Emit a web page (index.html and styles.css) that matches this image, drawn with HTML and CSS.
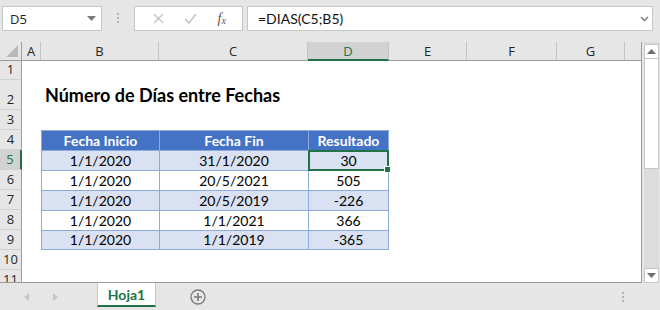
FILE: index.html
```html
<!DOCTYPE html>
<html lang="es">
<head>
    <meta charset="UTF-8">
    <title>Número de Días entre Fechas</title>
    <link rel="stylesheet" href="styles.css">
</head>
<body>
    <div class="app">
        <div class="formula-bar">
            <div class="name-box">
                <span>D5</span>
                <svg width="9" height="5" viewBox="0 0 9 5"><path d="M0 0h9L4.5 5z" fill="#7a7a7a"/></svg>
            </div>
            <div class="grip"><i></i><i></i><i></i></div>
            <div class="fx-buttons">
                <svg width="11" height="11" viewBox="0 0 11 11"><path d="M1 1l9 9M10 1l-9 9" stroke="#c4c4c4" stroke-width="1.4"/></svg>
                <svg width="13" height="11" viewBox="0 0 13 11"><path d="M1 6l4 4 7-9" stroke="#c4c4c4" stroke-width="1.6" fill="none"/></svg>
                <span class="fx">f<sub>x</sub></span>
            </div>
            <div class="formula-input">
                <span>=DIAS(C5;B5)</span>
                <svg width="9" height="6" viewBox="0 0 9 6"><path d="M1 1l3.5 3.5L8 1" stroke="#7a7a7a" stroke-width="1.5" fill="none"/></svg>
            </div>
        </div>

        <div class="workspace">
            <div class="grid">
                <div class="corner"><svg width="12" height="12" viewBox="0 0 12 12"><path d="M12 0v12H0z" fill="#b9b9b9"/></svg></div>
                <div class="col-head">A</div>
                <div class="col-head">B</div>
                <div class="col-head">C</div>
                <div class="col-head active">D</div>
                <div class="col-head">E</div>
                <div class="col-head">F</div>
                <div class="col-head">G</div>
                <div class="col-head last"></div>

                <div class="row-head">1</div>

                <div class="row-head">2</div>
                <div class="title">Número de Días entre Fechas</div>

                <div class="row-head">3</div>

                <div class="row-head">4</div>
                <div class="cell th cb">Fecha Inicio</div>
                <div class="cell th cc">Fecha Fin</div>
                <div class="cell th cd">Resultado</div>

                <div class="row-head active">5</div>
                <div class="cell band cb">1/1/2020</div>
                <div class="cell band cc">31/1/2020</div>
                <div class="cell band cd selected">30</div>

                <div class="row-head">6</div>
                <div class="cell cb">1/1/2020</div>
                <div class="cell cc">20/5/2021</div>
                <div class="cell cd">505</div>

                <div class="row-head">7</div>
                <div class="cell band cb">1/1/2020</div>
                <div class="cell band cc">20/5/2019</div>
                <div class="cell band cd">-226</div>

                <div class="row-head">8</div>
                <div class="cell cb">1/1/2020</div>
                <div class="cell cc">1/1/2021</div>
                <div class="cell cd">366</div>

                <div class="row-head">9</div>
                <div class="cell band cb bottom">1/1/2020</div>
                <div class="cell band cc bottom">1/1/2019</div>
                <div class="cell band cd bottom">-365</div>

                <div class="row-head">10</div>
                <div class="row-head">11</div>
            </div>

            <div class="vscroll">
                <div class="sbtn"><svg width="9" height="5" viewBox="0 0 9 5"><path d="M0 5h9L4.5 0z" fill="#6e6e6e"/></svg></div>
                <div class="thumb"></div>
                <div class="track"></div>
                <div class="sbtn"><svg width="9" height="5" viewBox="0 0 9 5"><path d="M0 0h9L4.5 5z" fill="#6e6e6e"/></svg></div>
            </div>
        </div>

        <div class="tabbar">
            <div class="nav">
                <svg width="5" height="8" viewBox="0 0 5 8"><path d="M5 0v8L0 4z" fill="#c6c6c6"/></svg>
                <svg width="5" height="8" viewBox="0 0 5 8"><path d="M0 0v8l5-4z" fill="#c6c6c6"/></svg>
            </div>
            <div class="tab">Hoja1</div>
            <div class="add-sheet">
                <svg width="16" height="16" viewBox="0 0 16 16"><circle cx="8" cy="8" r="7" fill="none" stroke="#7a7a7a" stroke-width="1.3"/><path d="M8 4v8M4 8h8" stroke="#7a7a7a" stroke-width="1.6"/></svg>
            </div>
            <div class="spacer"></div>
            <div class="grip small"><i></i><i></i><i></i></div>
        </div>
    </div>
</body>
</html>
```

FILE: styles.css
```css
body {
    margin: 0;
    font-family: 'Lato', 'Open Sans', sans-serif;
    background-color: #e6e6e6;
}
.app {
    width: 660px;
    height: 310px;
    display: flex;
    flex-direction: column;
    overflow: hidden;
    background-color: #e6e6e6;
}

/* barra de fórmulas */
.formula-bar {
    height: 42px;
    display: flex;
    align-items: flex-start;
    padding: 6px 7px 0 2px;
    box-sizing: border-box;
}
.name-box {
    width: 100px;
    height: 25px;
    box-sizing: border-box;
    background: #fff;
    border: 1px solid #c6c6c6;
    display: flex;
    align-items: center;
    justify-content: space-between;
    padding: 0 5px 0 7px;
    font-family: 'Open Sans', sans-serif;
    font-size: 13px;
    color: #222;
}
.grip {
    width: 32px;
    display: flex;
    flex-direction: column;
    align-items: center;
    gap: 2px;
    padding-top: 7px;
}
.grip i {
    width: 2px;
    height: 2px;
    background: #b3b3b3;
}
.fx-buttons {
    width: 109px;
    height: 25px;
    box-sizing: border-box;
    background: #fff;
    border: 1px solid #c6c6c6;
    display: flex;
    align-items: center;
    justify-content: space-around;
    padding: 0 6px 0 8px;
}
.fx {
    font-family: 'Liberation Serif', serif;
    font-style: italic;
    font-size: 14px;
    color: #555;
}
.fx sub {
    font-size: 10px;
    vertical-align: -1px;
}
.formula-input {
    flex: 1;
    margin-left: 4px;
    height: 25px;
    box-sizing: border-box;
    background: #fff;
    border: 1px solid #c6c6c6;
    display: flex;
    align-items: center;
    justify-content: space-between;
    padding: 0 3px 0 10px;
    font-size: 14px;
    color: #111;
}

/* hoja */
.workspace {
    height: 241px;
    display: flex;
}
.grid {
    width: 642px;
    box-sizing: border-box;
    border-right: 1px solid #9b9b9b;
    border-bottom: 1px solid #9b9b9b;
    background: #fff;
    display: grid;
    grid-template-columns: 22px 19px 118px 149px 81px 78px 90px 68px 16px;
    grid-template-rows: 19px 19px 30px repeat(9, 20px);
    overflow: hidden;
    font-size: 14px;
}
.corner {
    background: #e6e6e6;
    border-right: 1px solid #9b9b9b;
    border-bottom: 1px solid #9b9b9b;
    display: flex;
    align-items: flex-end;
    justify-content: flex-end;
    padding: 0 3px 3px 0;
}
.col-head {
    background: #e6e6e6;
    border-bottom: 1px solid #9b9b9b;
    border-right: 1px solid #c4c4c4;
    display: flex;
    align-items: center;
    justify-content: center;
    font-family: 'Open Sans', sans-serif;
    font-size: 13px;
    color: #262626;
    box-sizing: border-box;
}
.col-head.last {
    border-right: none;
}
.col-head.active {
    background: #d2d2d2;
    border-bottom: 2px solid #217346;
    color: #217346;
}
.row-head {
    grid-column: 1;
    background: #e6e6e6;
    border-right: 1px solid #9b9b9b;
    border-bottom: 1px solid #d0d0d0;
    display: flex;
    align-items: flex-end;
    justify-content: center;
    padding-bottom: 1px;
    font-family: 'Open Sans', sans-serif;
    font-size: 13px;
    color: #262626;
}
.row-head.active {
    background: #d2d2d2;
    border-right: 2px solid #217346;
    color: #217346;
}

.title {
    grid-column: 3 / 8;
    display: flex;
    align-items: flex-end;
    padding: 0 0 4px 4px;
    font-weight: bold;
    font-size: 18px;
    color: #000;
}

.cell {
    display: flex;
    align-items: flex-end;
    justify-content: center;
    padding-bottom: 1px;
    border-top: 1px solid #8ea9db;
    border-left: 1px solid #8ea9db;
    color: #000;
}
.cb { grid-column: 3; }
.cc { grid-column: 4; }
.cd {
    grid-column: 5;
    border-right: 1px solid #8ea9db;
}
.bottom {
    border-bottom: 1px solid #8ea9db;
}
.th {
    background: #4472c4;
    color: #fff;
    font-weight: bold;
}
.band {
    background: #d9e1f2;
}
.selected {
    position: relative;
}
.selected::after {
    content: "";
    position: absolute;
    inset: -1px -1px -1px -1px;
    border: 2px solid #217346;
}
.selected::before {
    content: "";
    position: absolute;
    right: -3px;
    bottom: -3px;
    width: 5px;
    height: 5px;
    background: #217346;
    border: 1px solid #fff;
    z-index: 1;
}

/* barra de desplazamiento */
.vscroll {
    width: 15px;
    margin-left: 2px;
    padding-top: 2px;
    display: flex;
    flex-direction: column;
    background: #dcdcdc;
}
.sbtn {
    height: 15px;
    box-sizing: border-box;
    background: #fff;
    border: 1px solid #c6c6c6;
    display: flex;
    align-items: center;
    justify-content: center;
}
.thumb {
    height: 110px;
    background: #fff;
    border: 1px solid #c6c6c6;
    border-top: none;
    box-sizing: border-box;
}
.track {
    flex: 1;
}

/* pestañas */
.tabbar {
    height: 27px;
    display: flex;
    align-items: flex-start;
}
.nav {
    width: 97px;
    display: flex;
    gap: 24px;
    padding: 10px 0 0 24px;
    box-sizing: border-box;
}
.tab {
    width: 59px;
    height: 24px;
    box-sizing: border-box;
    background: #fff;
    border-left: 1px solid #c6c6c6;
    border-right: 1px solid #c6c6c6;
    border-bottom: 2px solid #217346;
    display: flex;
    align-items: center;
    justify-content: center;
    font-weight: bold;
    font-size: 14px;
    color: #217346;
}
.add-sheet {
    padding: 6px 0 0 34px;
}
.spacer {
    flex: 1;
}
.grip.small {
    width: 2px;
    padding: 9px 36px 0 0;
}
```
